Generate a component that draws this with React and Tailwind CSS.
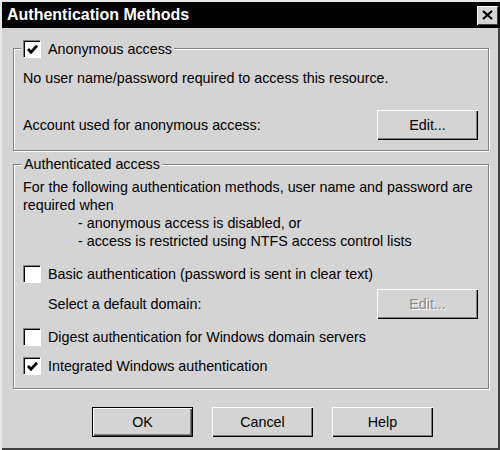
import React from "react";

const Check = ({ checked }) => (
  <span className="w-[17px] h-[17px] bg-white border-t border-l border-[#808080] shadow-[inset_1px_1px_0_#000,1px_1px_0_#fff] flex items-center justify-center shrink-0">
    {checked && (
      <svg width="11" height="11" viewBox="0 0 11 11">
        <path d="M1 5 L4 8.3 L10 1.8" fill="none" stroke="#000" strokeWidth="2.8" />
      </svg>
    )}
  </span>
);

const Btn = ({ children, disabled, isDefault }) => (
  <button
    className={
      "w-[101px] h-[30px] bg-[#d4d4d4] text-[14.3px] flex items-center justify-center " +
      (isDefault
        ? "border border-black shadow-[inset_1px_1px_0_#fff,inset_-1px_-1px_0_#404040,inset_-2px_-2px_0_#808080]"
        : "shadow-[inset_1px_1px_0_#fff,inset_-1px_-1px_0_#000,inset_-2px_-2px_0_#808080]") +
      (disabled ? " text-[#8a8a8a] [text-shadow:1px_1px_0_#fff]" : " text-black")
    }
  >
    {children}
  </button>
);

const Row = ({ checked, children }) => (
  <div className="flex items-center gap-[8px] h-[17px]">
    <Check checked={checked} />
    <span>{children}</span>
  </div>
);

export default function App() {
  return (
    <div
      className="w-[500px] h-[450px] bg-[#d4d4d4] text-black text-[14.3px] leading-[18px] flex flex-col border-l-2 border-t-2 border-[#e8e8e8] shadow-[inset_-2px_-2px_0_#404040] overflow-hidden"
      style={{ fontFamily: '"Liberation Sans", Arial, sans-serif' }}
    >
      <div className="h-[26px] bg-black flex items-center justify-between pl-[5px] pr-[4px] -mx-[2px] -mt-[2px] box-content pt-[2px]">
        <span className="text-white font-bold text-[16px] pl-[2px]">Authentication Methods</span>
        <span className="w-[21px] h-[19px] bg-[#d4d4d4] shadow-[inset_1px_1px_0_#fff,inset_-1px_-1px_0_#404040] flex items-center justify-center">
          <svg width="11" height="10" viewBox="0 0 11 10">
            <path d="M1 1 L10 9 M10 1 L1 9" stroke="#000" strokeWidth="2.2" />
          </svg>
        </span>
      </div>

      <div className="flex-1 flex flex-col px-[11px]">
        <fieldset className="mt-[12px] border border-[#808080] shadow-[1px_1px_0_#fff,inset_1px_1px_0_#fff] pl-[9px] pr-[10px] pb-[10px]">
          <legend className="-ml-[2px] px-[2px] bg-[#d4d4d4]">
            <Row checked>Anonymous access</Row>
          </legend>
          <div className="mt-[12px]">No user name/password required to access this resource.</div>
          <div className="mt-[23px] flex items-center justify-between">
            <span>Account used for anonymous access:</span>
            <Btn>Edit...</Btn>
          </div>
        </fieldset>

        <fieldset className="mt-[4px] border border-[#808080] shadow-[1px_1px_0_#fff,inset_1px_1px_0_#fff] pl-[9px] pr-[10px] pb-[14px]">
          <legend className="-ml-[1px] px-[2px] bg-[#d4d4d4]">Authenticated access</legend>
          <div className="mt-[5px]">
            For the following authentication methods, user name and password are required when
          </div>
          <div className="pl-[55px]">- anonymous access is disabled, or</div>
          <div className="pl-[55px]">- access is restricted using NTFS access control lists</div>
          <div className="mt-[15px]">
            <Row>Basic authentication (password is sent in clear text)</Row>
          </div>
          <div className="mt-[7px] flex items-center justify-between pl-[25px]">
            <span>Select a default domain:</span>
            <Btn disabled>Edit...</Btn>
          </div>
          <div className="mt-[9px]">
            <Row>Digest authentication for Windows domain servers</Row>
          </div>
          <div className="mt-[12px]">
            <Row checked>Integrated Windows authentication</Row>
          </div>
        </fieldset>

        <div className="mt-[18px] flex gap-[19px] pl-[79px]">
          <Btn isDefault>OK</Btn>
          <Btn>Cancel</Btn>
          <Btn>Help</Btn>
        </div>
      </div>
    </div>
  );
}
